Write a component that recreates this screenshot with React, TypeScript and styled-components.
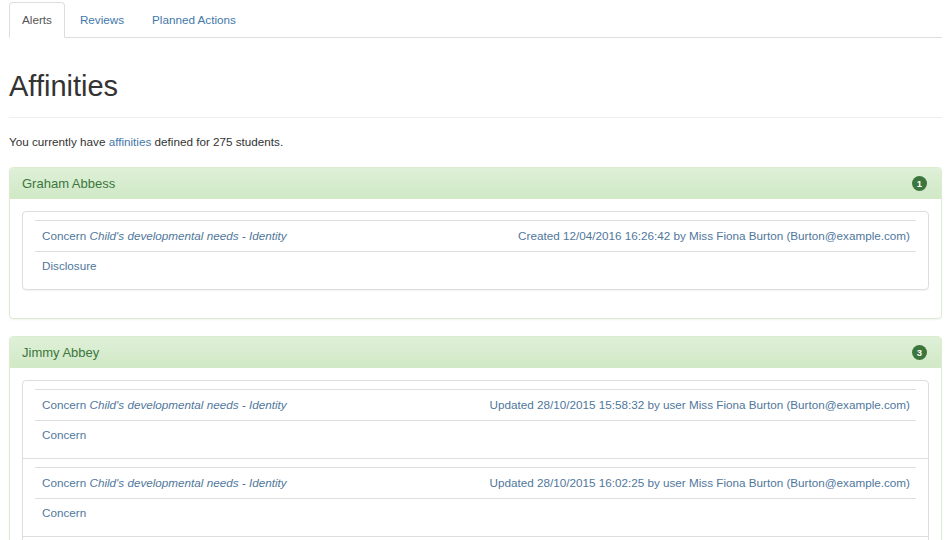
import styled, {createGlobalStyle} from "styled-components";

const GlobalStyle = createGlobalStyle`
    html, body {
        margin: 0;
        padding: 0;
        background: #fff;
    }

    body {
        font-family: "Liberation Sans", Arial, sans-serif;
        font-size: 11.7px;
        color: #333;
    }
`

type Entry = {
    kind: string
    category: string
    stamp: string
    detail: string
}

type Student = {
    name: string
    entries: Entry[]
}

const students: Student[] = [
    {
        name: "Graham Abbess",
        entries: [
            {
                kind: "Concern",
                category: "Child's developmental needs - Identity",
                stamp: "Created 12/04/2016 16:26:42 by Miss Fiona Burton (Burton@example.com)",
                detail: "Disclosure",
            },
        ],
    },
    {
        name: "Jimmy Abbey",
        entries: [
            {
                kind: "Concern",
                category: "Child's developmental needs - Identity",
                stamp: "Updated 28/10/2015 15:58:32 by user Miss Fiona Burton (Burton@example.com)",
                detail: "Concern",
            },
            {
                kind: "Concern",
                category: "Child's developmental needs - Identity",
                stamp: "Updated 28/10/2015 16:02:25 by user Miss Fiona Burton (Burton@example.com)",
                detail: "Concern",
            },
            {
                kind: "Concern",
                category: "Child's developmental needs - Identity",
                stamp: "Updated 28/10/2015 16:05:10 by user Miss Fiona Burton (Burton@example.com)",
                detail: "Concern",
            },
        ],
    },
]

const tabs = ["Alerts", "Reviews", "Planned Actions"]

const App = () => {
    return (
        <Page>
            <GlobalStyle/>
            <TabBar>
                {tabs.map((tab, i) => (
                    <Tab key={tab} $active={i === 0}>{tab}</Tab>
                ))}
            </TabBar>

            <PageHeader>
                <Title>Affinities</Title>
            </PageHeader>

            <Intro>
                You currently have <Link>affinities</Link> defined for 275 students.
            </Intro>

            {students.map(student => (
                <Panel key={student.name}>
                    <PanelHeading>
                        <PanelTitle>{student.name}</PanelTitle>
                        <Badge>{student.entries.length}</Badge>
                    </PanelHeading>
                    <PanelBody>
                        <InnerPanel>
                            {student.entries.map((entry, i) => (
                                <Item key={i}>
                                    <EntryTable>
                                        <tbody>
                                        <tr>
                                            <Cell>
                                                {entry.kind} <em>{entry.category}</em>
                                            </Cell>
                                            <Cell $right>{entry.stamp}</Cell>
                                        </tr>
                                        <tr>
                                            <Cell colSpan={2}>{entry.detail}</Cell>
                                        </tr>
                                        </tbody>
                                    </EntryTable>
                                </Item>
                            ))}
                        </InnerPanel>
                    </PanelBody>
                </Panel>
            ))}
        </Page>
    )
}

export default App

const Page = styled.div`
    padding: 2px 8px 0 9px;
    height: 540px;
    overflow: hidden;
    box-sizing: border-box;
`

const TabBar = styled.ul`
    display: flex;
    list-style: none;
    margin: 0;
    padding: 0;
    border-bottom: 1px solid #ddd;
`

const Tab = styled.li<{ $active: boolean }>`
    margin-bottom: -1px;
    margin-right: 2px;
    padding: 10px 12px;
    line-height: 14px;
    border: 1px solid ${({$active}) => $active ? '#ddd' : 'transparent'};
    border-bottom-color: ${({$active}) => $active ? '#fff' : 'transparent'};
    border-radius: 4px 4px 0 0;
    background: ${({$active}) => $active ? '#fff' : 'transparent'};
    color: ${({$active}) => $active ? '#555' : '#3f78aa'};
    cursor: pointer;
`

const PageHeader = styled.div`
    margin-top: 32px;
    padding-bottom: 15px;
    border-bottom: 1px solid #eee;
`

const Title = styled.h1`
    margin: 0;
    font-size: 29px;
    line-height: 32px;
    font-weight: 400;
    color: #333;
`

const Intro = styled.p`
    margin: 16px 0 17px;
    line-height: 16px;
`

const Link = styled.a`
    color: #3f78aa;
    cursor: pointer;
`

const Panel = styled.div`
    border: 1px solid #dceccf;
    border-radius: 4px;
    margin-bottom: 17px;
    box-shadow: 0 1px 2px rgba(0, 0, 0, 0.05);
`

const PanelHeading = styled.div`
    display: flex;
    align-items: center;
    justify-content: space-between;
    height: 31px;
    box-sizing: border-box;
    padding: 0 12px;
    background-image: linear-gradient(to bottom, #dff0d8 0%, #d0e9c6 100%);
    border-bottom: 1px solid #d6e9c6;
    border-radius: 3px 3px 0 0;
`

const PanelTitle = styled.div`
    font-size: 13px;
    color: #3c763d;
`

const Badge = styled.span`
    display: inline-flex;
    align-items: center;
    justify-content: center;
    min-width: 15px;
    height: 15px;
    border-radius: 8px;
    background: #3c763d;
    color: #fff;
    font-size: 9.5px;
    font-weight: 700;
    margin-right: 2px;
`

const PanelBody = styled.div`
    padding: 12px;
`

const InnerPanel = styled.div`
    border: 1px solid #ddd;
    border-radius: 4px;
    margin-bottom: 16px;
    box-shadow: 0 1px 1px rgba(0, 0, 0, 0.05);
`

const Item = styled.div`
    padding: 8px 12px;

    & + & {
        border-top: 1px solid #ddd;
    }
`

const EntryTable = styled.table`
    width: 100%;
    border-collapse: collapse;
`

const Cell = styled.td<{ $right?: boolean }>`
    border-top: 1px solid #ddd;
    padding: 0 6px 0 7px;
    height: 29.5px;
    line-height: 16px;
    color: #50779c;
    text-align: ${({$right}) => $right ? 'right' : 'left'};
    white-space: nowrap;
`
